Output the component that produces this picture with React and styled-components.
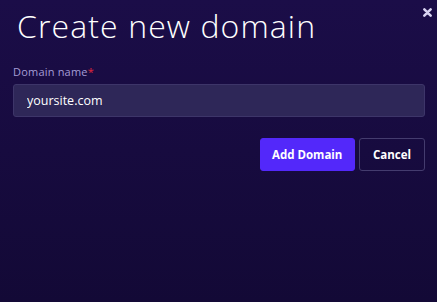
import React from "react";
import styled, { createGlobalStyle } from "styled-components";

const Global = createGlobalStyle`
  html, body { margin: 0; padding: 0; }
  body {
    width: 437px;
    height: 302px;
    overflow: hidden;
    background: #150a3a;
    font-family: "Open Sans", "DejaVu Sans", sans-serif;
  }
`;

const Modal = styled.div`
  position: relative;
  box-sizing: border-box;
  width: 437px;
  height: 302px;
  padding: 6px 12px 0 13px;
  background: linear-gradient(180deg, #1b0d48 0%, #170b3f 50%, #130936 100%);
  display: flex;
  flex-direction: column;
`;

const Title = styled.h1`
  margin: 0 0 0 4px;
  font-family: "Open Sans", sans-serif;
  font-weight: 300;
  font-size: 32px;
  line-height: 40px;
  color: #ffffff;
  letter-spacing: 1.1px;
`;

const Close = styled.button`
  position: absolute;
  top: 6px;
  right: 4px;
  width: 12px;
  height: 12px;
  padding: 0;
  border: none;
  background: transparent;
  display: flex;
  align-items: center;
  justify-content: center;
  cursor: pointer;
`;

const Field = styled.div`
  margin-top: 18px;
  display: flex;
  flex-direction: column;
  gap: 5px;
`;

const Label = styled.label`
  font-size: 11px;
  line-height: 15px;
  color: #a59cd6;
  letter-spacing: 0.2px;
`;

const Star = styled.span`
  color: #e0263a;
`;

const Input = styled.input`
  box-sizing: border-box;
  height: 33px;
  width: 100%;
  padding: 0 13px;
  border: 1px solid #3d3569;
  border-radius: 3px;
  background: #2e2758;
  color: #ffffff;
  font-family: "Open Sans", sans-serif;
  font-size: 12.5px;
  outline: none;
`;

const Actions = styled.div`
  margin-top: 21px;
  display: flex;
  justify-content: flex-end;
  gap: 4px;
`;

const Button = styled.button`
  box-sizing: border-box;
  height: 33px;
  padding: 0 ${(p) => (p.$primary ? "11.5px" : "13px")};
  border-radius: 3px;
  border: 1px solid ${(p) => (p.$primary ? "#5328fa" : "#443c6e")};
  background: ${(p) => (p.$primary ? "#5328fa" : "transparent")};
  color: #ffffff;
  font-family: "Open Sans", sans-serif;
  font-weight: 700;
  font-size: 11.5px;
  cursor: pointer;
`;

export default function App() {
  return (
    <>
      <Global />
      <Modal>
        <Title>Create new domain</Title>
        <Close aria-label="close">
          <svg width="9" height="9" viewBox="0 0 10 10">
            <path d="M1.5 1.5 L8.5 8.5 M8.5 1.5 L1.5 8.5" stroke="#d9d4f2" strokeWidth="2.8" strokeLinecap="round" />
          </svg>
        </Close>
        <Field>
          <Label>
            Domain name<Star>*</Star>
          </Label>
          <Input defaultValue="yoursite.com" />
        </Field>
        <Actions>
          <Button $primary>Add Domain</Button>
          <Button>Cancel</Button>
        </Actions>
      </Modal>
    </>
  );
}
